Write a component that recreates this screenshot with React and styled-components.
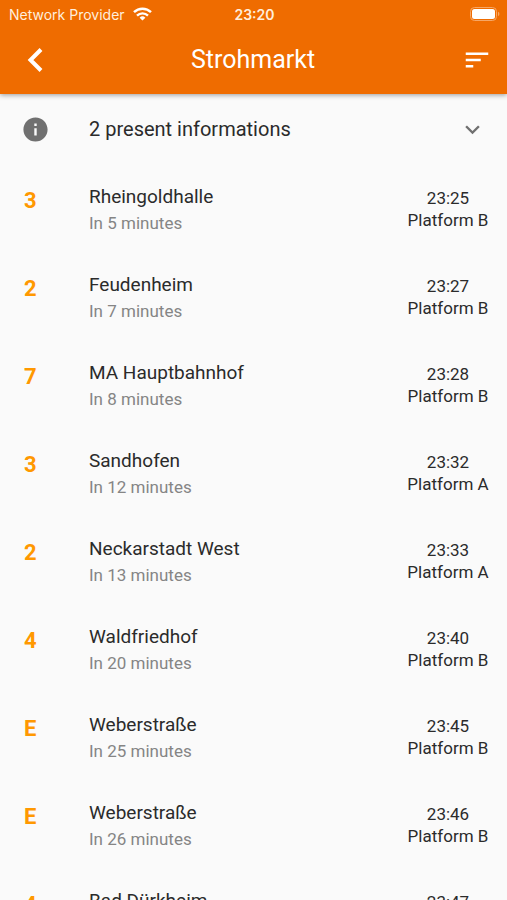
import React from 'react';
import styled, { createGlobalStyle } from 'styled-components'
import { MdInfo, MdExpandMore, MdSort } from 'react-icons/md'

const GlobalStyle = createGlobalStyle`
  * {
    box-sizing: border-box;
  }
  body {
    margin: 0;
    background-color: #fafafa;
    font-family: Roboto, 'Liberation Sans', sans-serif;
  }
`

const Page = styled.div`
  height: 100vh;
  display: flex;
  flex-direction: column;
  overflow: hidden;
`

const Header = styled.header`
  flex: none;
  color: white;
  background-color: #ef6c00;
  box-shadow: 0 1px 5px rgba(0,0,0,0.4);
  z-index: 1;
`

const StatusBar = styled.div`
  height: 28px;
  display: grid;
  grid-template-columns: 1fr auto 1fr;
  align-items: center;
  padding: 0 7px 0 9px;
  font-family: Inter, sans-serif;
  font-size: 14px;
  color: #ffeedd;
`

const Carrier = styled.div`
  display: flex;
  align-items: center;
  gap: 8px;
`

const Clock = styled.span`
  font-weight: 600;
`

const Battery = styled.svg`
  justify-self: end;
`

const Toolbar = styled.div`
  height: 66px;
  display: grid;
  grid-template-columns: 48px 1fr 54px;
  align-items: center;
  padding: 0 6px 2px 11px;
`

const IconButton = styled.button`
  width: 48px;
  height: 48px;
  display: flex;
  align-items: center;
  justify-content: center;
  justify-self: ${props => props.$end ? 'end' : 'start'};
  padding: 0;
  border: 0;
  background: none;
  color: inherit;
  cursor: pointer;
`

const Title = styled.h1`
  margin: 0;
  font-size: 25px;
  font-weight: 400;
  line-height: 32px;
  text-align: center;
`

const Content = styled.main`
  flex: 1;
  min-height: 0;
  overflow-y: auto;
  scrollbar-width: none;
`

const InfoRow = styled.button`
  width: 100%;
  height: 70px;
  display: grid;
  grid-template-columns: 68px 1fr auto;
  align-items: center;
  padding: 0 20px 0 21px;
  border: 0;
  background: none;
  color: #2b2b2b;
  font-family: inherit;
  font-size: 20px;
  text-align: left;
  cursor: pointer;
  svg {
    color: #707070;
  }
`

const List = styled.ul`
  margin: 0;
  padding: 0;
  list-style: none;
`

const Item = styled.li`
  height: 88px;
  display: grid;
  grid-template-columns: 65px 1fr 82px;
  align-items: start;
  padding: 20px 18px 0 24px;
`

const Line = styled.span`
  font-size: 22px;
  font-weight: 700;
  line-height: 34px;
  color: #ff9800;
`

const Station = styled.div`
  font-size: 19px;
  line-height: 26px;
  color: #2b2b2b;
`

const Remaining = styled.div`
  font-size: 17px;
  line-height: 26px;
  color: #858585;
`

const Departure = styled.div`
  padding-top: 3px;
  font-size: 17px;
  line-height: 22px;
  text-align: center;
  white-space: nowrap;
  color: #2b2b2b;
`

const departures = [
  { line: '3', station: 'Rheingoldhalle', minutes: 5, time: '23:25', platform: 'B' },
  { line: '2', station: 'Feudenheim', minutes: 7, time: '23:27', platform: 'B' },
  { line: '7', station: 'MA Hauptbahnhof', minutes: 8, time: '23:28', platform: 'B' },
  { line: '3', station: 'Sandhofen', minutes: 12, time: '23:32', platform: 'A' },
  { line: '2', station: 'Neckarstadt West', minutes: 13, time: '23:33', platform: 'A' },
  { line: '4', station: 'Waldfriedhof', minutes: 20, time: '23:40', platform: 'B' },
  { line: 'E', station: 'Weberstraße', minutes: 25, time: '23:45', platform: 'B' },
  { line: 'E', station: 'Weberstraße', minutes: 26, time: '23:46', platform: 'B' },
  { line: '4', station: 'Bad Dürkheim', minutes: 27, time: '23:47', platform: 'B' },
]

const WifiIcon = () => (
  <svg width="19" height="14" viewBox="0 0 19 14" fill="none" stroke="white" strokeWidth="2.4">
    <path d="M1 5.2a12.2 12.2 0 0 1 17 0" />
    <path d="M4 8.6a7.9 7.9 0 0 1 11 0" />
    <path d="M9.5 13.6 6.6 10.7a4.1 4.1 0 0 1 5.8 0z" fill="white" stroke="none" />
  </svg>
)

const BatteryIcon = () => (
  <Battery width="30" height="14" viewBox="0 0 30 14">
    <rect x="0.5" y="0.5" width="26" height="13" rx="4" fill="none" stroke="#f6a766" />
    <rect x="2" y="2" width="23" height="10" rx="2.5" fill="white" />
    <path d="M28 4.8v4.4a2.4 2.4 0 0 0 0-4.4z" fill="#f6a766" />
  </Battery>
)

const BackIcon = () => (
  <svg width="16" height="24" viewBox="0 0 16 24" fill="none" stroke="white" strokeWidth="4">
    <path d="M14 1.5 3.5 12 14 22.5" />
  </svg>
)

export default function App() {
  return (
    <Page>
      <GlobalStyle />
      <Header>
        <StatusBar>
          <Carrier>
            <span>Network Provider</span>
            <WifiIcon />
          </Carrier>
          <Clock>23:20</Clock>
          <BatteryIcon />
        </StatusBar>
        <Toolbar>
          <IconButton aria-label="Back"><BackIcon /></IconButton>
          <Title>Strohmarkt</Title>
          <IconButton $end aria-label="Sort"><MdSort size={30} /></IconButton>
        </Toolbar>
      </Header>
      <Content>
        <InfoRow aria-expanded="false">
          <MdInfo size={29} />
          <span>2 present informations</span>
          <MdExpandMore size={29} />
        </InfoRow>
        <List>
          {departures.map((item, index) => (
            <Item key={index}>
              <Line>{item.line}</Line>
              <div>
                <Station>{item.station}</Station>
                <Remaining>In {item.minutes} minutes</Remaining>
              </div>
              <Departure>
                <div>{item.time}</div>
                <div>Platform {item.platform}</div>
              </Departure>
            </Item>
          ))}
        </List>
      </Content>
    </Page>
  )
}
